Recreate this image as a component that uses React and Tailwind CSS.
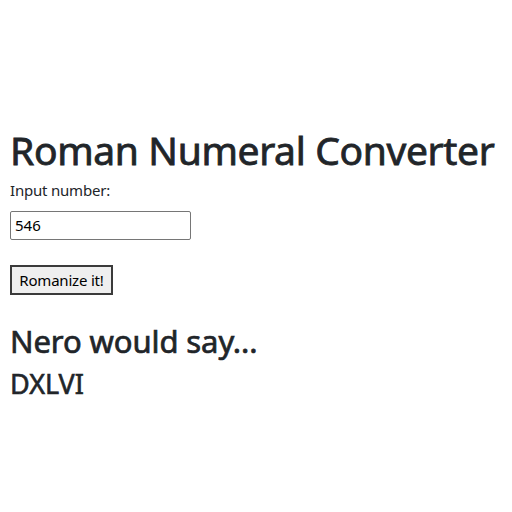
export default function App() {
  return (
    <div className="min-h-[512px] bg-white text-[#212529] px-[10px] pt-[127px]" style={{ fontFamily: '"Noto Sans", "Open Sans", sans-serif' }}>
      <h1 className="text-[39px] leading-[1.2] font-normal tracking-[-0.35px] mb-[6px] [-webkit-text-stroke:0.8px_#212529]">Roman Numeral Converter</h1>
      <div className="text-[15px] leading-[20px] mb-[11px] tracking-[-0.2px]">Input number:</div>
      <input
        defaultValue="546"
        className="block w-[181px] h-[29px] border border-[#767676] rounded-[2px] px-[4px] text-[15px] text-black outline-none"
      />
      <button className="mt-[25px] h-[30px] w-[103px] border-2 border-[#3b3b3b] bg-[#efefef] text-[15px] text-black tracking-[-0.2px]">Romanize it!</button>
      <h2 className="text-[31px] leading-[1.2] font-normal mt-[28px] tracking-[-0.1px] [-webkit-text-stroke:0.7px_#212529]">Nero would say...</h2>
      <h3 className="text-[27px] leading-[1.2] font-normal mt-[8px] tracking-[0px] [-webkit-text-stroke:0.6px_#212529]">DXLVI</h3>
    </div>
  );
}
